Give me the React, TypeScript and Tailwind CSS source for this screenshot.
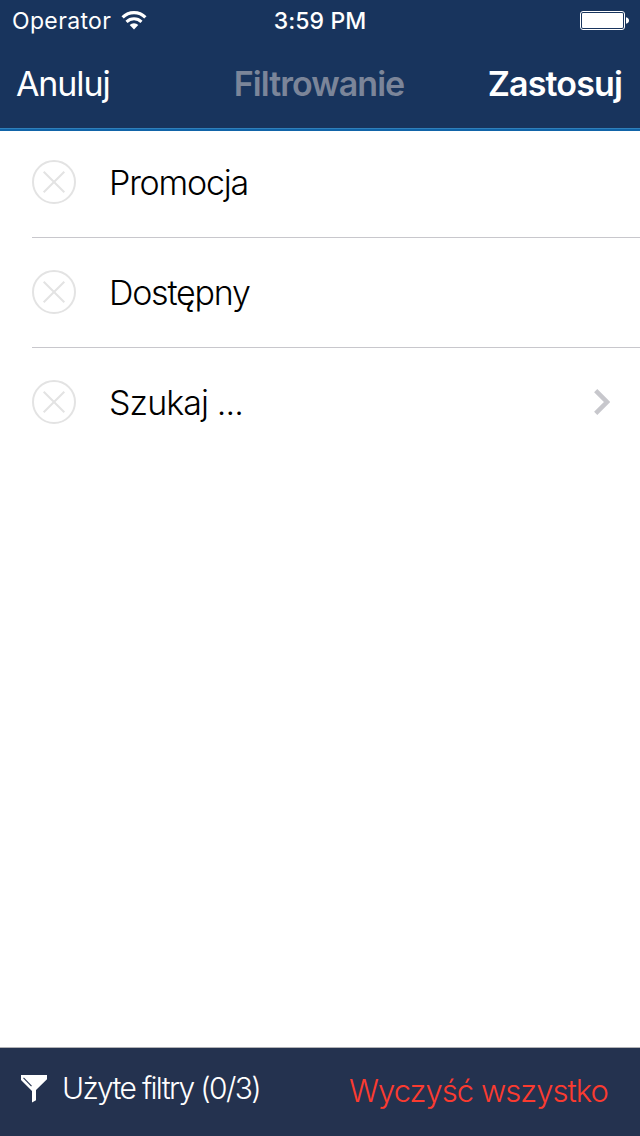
const filters = [
  { label: "Promocja", tracking: "tracking-[-1.2px]", more: false },
  { label: "Dostępny", tracking: "tracking-[-1.25px]", more: false },
  { label: "Szukaj ...", tracking: "tracking-[-0.9px]", more: true },
];

function WifiIcon() {
  return (
    <svg className="ml-[10px] h-[19px] w-[26px]" viewBox="0 0 26 19" fill="none" stroke="#fff">
      <path d="M1.6 6.4a16.2 16.2 0 0 1 22.8 0" strokeWidth="3.2" />
      <path d="M5.5 10.9a10.8 10.8 0 0 1 15 0" strokeWidth="3" />
      <path d="M8.7 14.1a6 6 0 0 1 8.600 0L13 18.500z" fill="#fff" stroke="none" />
    </svg>
  );
}

function BatteryIcon() {
  return (
    <svg className="h-[20px] w-[50px]" viewBox="0 0 50 20" fill="none">
      <rect x="0.5" y="1.5" width="44" height="18" rx="2.5" stroke="#fff" />
      <rect x="2" y="3" width="41" height="15" rx="1" fill="#fff" />
      <path d="M46 7.2c2 .6 3 1.6 3 3.3s-1 2.7-3 3.3z" fill="#fff" />
    </svg>
  );
}

function ClearIcon() {
  return (
    <svg className="mb-px size-[44px] shrink-0" viewBox="0 0 44 44" fill="none" stroke="#e3e3e3" strokeWidth="2">
      <circle cx="22" cy="22" r="21" />
      <path d="M11.7 11.7 32.3 32.3M32.3 11.7 11.7 32.3" />
    </svg>
  );
}

function FunnelIcon() {
  return (
    <svg className="mt-[2px] h-[28px] w-[26px]" viewBox="0 0 26 28">
      <path d="M0 0h26v4.200L15 15v10.200L11 27.500V16L0 5z" fill="#fff" />
      <path d="M2.500 2.800 10.500 11.200" stroke="#24324f" strokeWidth="1.100" />
    </svg>
  );
}

export default function App() {
  return (
    <div className="flex h-[1136px] w-[640px] flex-col overflow-hidden bg-white font-['Inter','Liberation_Sans',sans-serif]">
      <header className="relative h-[128px] bg-[#18345d] text-white">
        {/* Status bar */}
        <div className="grid h-[40px] grid-cols-3 items-center pr-[10px] pl-[12px] text-[23px]">
          <div className="flex items-center">
            <span className="pt-[2px] leading-[38px] tracking-[0.35px]">Operator</span>
            <WifiIcon />
          </div>
          <span className="pt-[2px] pr-[2px] text-center leading-[38px] font-medium tracking-[0.1px]">3:59 PM</span>
          <div className="flex justify-end">
            <BatteryIcon />
          </div>
        </div>

        {/* Navigation bar */}
        <nav className="grid h-[88px] grid-cols-3 items-center pr-[18px] pl-4 text-[34px] leading-[88px]">
          <button className="text-left tracking-[-1.1px]">Anuluj</button>
          <h1 className="text-center font-semibold tracking-[-0.95px] text-[#7b8599]">Filtrowanie</h1>
          <button className="text-right font-semibold tracking-[-0.85px]">Zastosuj</button>
        </nav>
        <div className="absolute inset-x-0 top-full h-[3px] border-t border-[#2f80bb] bg-[#1164a8]" />
      </header>

      <main className="flex-1">
        <ul className="pl-8">
          {filters.map((filter) => (
            <li
              key={filter.label}
              className="flex h-[110px] items-center border-b border-[#c8c7cc] pr-[30px] last:border-transparent"
            >
              <ClearIcon />
              <span className={`ml-[33px] text-[34px] leading-[45px] font-light text-black ${filter.tracking}`}>
                {filter.label}
              </span>
              {filter.more && (
                <svg className="mb-px ml-auto h-[26px] w-[16px]" viewBox="0 0 16 26" fill="none" stroke="#c7c7cc" strokeWidth="4.5">
                  <path d="M1.7 1.7 13 13 1.7 24.3" />
                </svg>
              )}
            </li>
          ))}
        </ul>
      </main>

      <footer className="flex h-[89px] items-center justify-between border-t border-[#b2b2b5] bg-[#24324f] pr-8 pl-[21px] font-light">
        <div className="flex items-center pb-[8px] text-white">
          <FunnelIcon />
          <span className="ml-[15px] text-[30px] leading-[40px] tracking-[-1.68px]">Użyte filtry (0/3)</span>
        </div>
        <button className="pb-[2px] text-[31px] leading-[40px] tracking-[-0.95px] text-[#fb3b30]">Wyczyść wszystko</button>
      </footer>
    </div>
  );
}
